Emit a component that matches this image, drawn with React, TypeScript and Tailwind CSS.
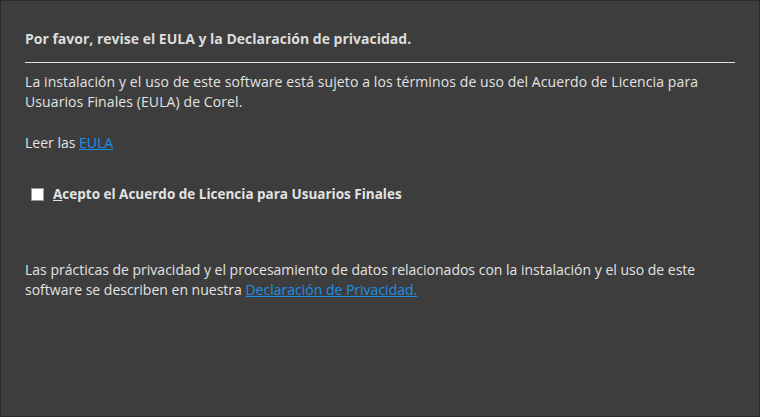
export default function App() {
  return (
    <div
      className="w-[760px] h-[417px] bg-[#3d3d3d] border border-[#2a2a2a] text-[#e3e3e3] text-[14px] leading-[20px]"
      style={{ fontFamily: '"Open Sans", "Noto Sans", sans-serif' }}
    >
      <div className="pl-[24px] pr-[24px] pt-[28px]">
        <h1 className="font-bold text-[14px] text-[#dcdcdc]">
          Por favor, revise el EULA y la Declaración de privacidad.
        </h1>
        <div className="mt-[13px] h-px bg-[#e0e0e0]" />
        <p className="mt-[9px] tracking-[0.1px]">
          La instalación y el uso de este software está sujeto a los términos de uso del Acuerdo de Licencia para
          <br />
          Usuarios Finales (EULA) de Corel.
        </p>
        <p className="mt-[21px]">
          Leer las{' '}
          <a href="#" className="text-[#1a8fe8] underline">
            EULA
          </a>
        </p>
        <label className="mt-[31px] ml-[6px] flex items-center gap-[9px] font-bold text-[13.5px]">
          <span className="w-[13px] h-[13px] bg-white border border-[#9a9a9a]" />
          <span>
            <span className="underline">A</span>cepto el Acuerdo de Licencia para Usuarios Finales
          </span>
        </label>
        <p className="mt-[56px]">
          Las prácticas de privacidad y el procesamiento de datos relacionados con la instalación y el uso de este
          <br />
          software se describen en nuestra{' '}
          <a href="#" className="text-[#1a8fe8] underline">
            Declaración de Privacidad.
          </a>
        </p>
      </div>
    </div>
  )
}
